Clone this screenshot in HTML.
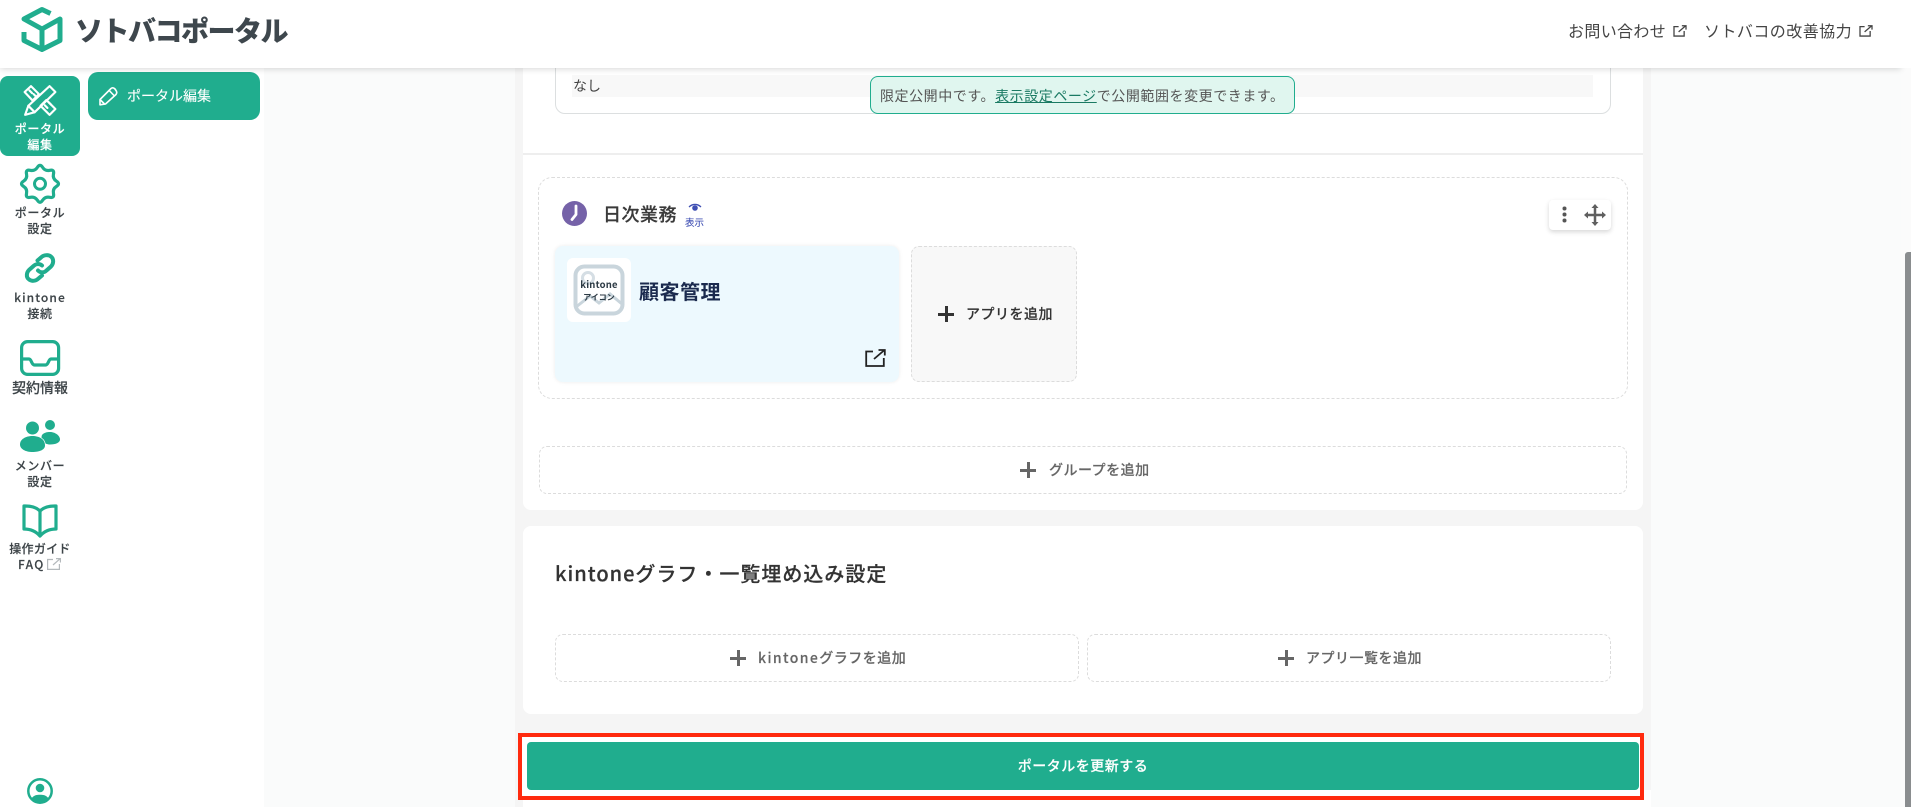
<!DOCTYPE html>
<html lang="ja">
<head>
<meta charset="utf-8">
<title>ソトバコポータル</title>
<style>
*{box-sizing:border-box;margin:0;padding:0}
html,body{width:1911px;height:807px;overflow:hidden;background:#fafbfb;font-family:"Noto Sans CJK JP","Liberation Sans",sans-serif;color:#333}
.abs,.t{position:absolute}
.t{white-space:nowrap;line-height:1}
svg{position:absolute;display:block;overflow:visible}
#col{position:absolute;left:515px;top:0;width:1136px;height:807px;background:#f5f5f5}
.card{position:absolute;left:523px;width:1120px;background:#fff}
.dash{position:absolute;border:1px dashed #dcdcdc;border-radius:8px;background:#fff}
.lbl{position:absolute;width:80px;text-align:center;font-size:12px;line-height:16px;font-weight:500;color:#3d4448;letter-spacing:.6px;left:0;-webkit-text-stroke:.15px currentColor}
.add{font-size:14px;font-weight:500;color:#666;letter-spacing:.5px;-webkit-text-stroke:.15px currentColor}
.plus{position:absolute;width:16px;height:16px;background:linear-gradient(#666,#666) center/16px 3px no-repeat,linear-gradient(#666,#666) center/3px 16px no-repeat}
</style>
</head>
<body>
<div id="col"></div>

<!-- top card -->
<div class="card" style="top:60px;height:450px;border-radius:0 0 8px 8px"></div>
<div class="abs" style="left:555px;top:50px;width:1056px;height:64px;border:1px solid #dcdfe0;border-radius:10px;background:#fff"></div>
<div class="abs" style="left:572px;top:75px;width:1021px;height:22px;background:#f8f8f8"></div>
<div class="t" style="left:573px;top:79px;font-size:14px;color:#444">なし</div>
<div class="abs" style="left:523px;top:153px;width:1120px;height:2px;background:#eeeeee"></div>

<!-- group -->
<div class="dash" style="left:538px;top:177px;width:1090px;height:222px;border-radius:14px"></div>
<svg style="left:562px;top:201px" width="25" height="25" viewBox="0 0 25 25"><circle cx="12.5" cy="12.5" r="12.5" fill="#7562a8"/><path d="M14 5V13.5L10 18.500" fill="none" stroke="#fff" stroke-width="2.800" stroke-linecap="round" stroke-linejoin="round"/></svg>
<div class="t" style="left:603px;top:205px;font-size:18px;font-weight:500;color:#3a3a3a;letter-spacing:.5px;-webkit-text-stroke:.2px currentColor">日次業務</div>
<svg style="left:688px;top:203px" width="14" height="9" viewBox="0 0 14 9"><path d="M1 4C4.5 .6 9.500 .6 13 4" fill="none" stroke="#3f4fb3" stroke-width="1.300"/><circle cx="7" cy="5" r="2.800" fill="#3f4fb3"/></svg>
<div class="t" style="left:685px;top:218px;font-size:9.500px;color:#3f4fb3;-webkit-text-stroke:.1px currentColor">表示</div>

<div class="abs" style="left:1549px;top:200px;width:62px;height:30px;background:#fff;border-radius:4px;box-shadow:0 2px 5px rgba(0,0,0,.16)"></div>
<svg style="left:1549px;top:200px" width="62" height="30" viewBox="0 0 62 30"><g fill="#555"><circle cx="15.500" cy="8.500" r="2"/><circle cx="15.500" cy="14.500" r="2"/><circle cx="15.500" cy="20.500" r="2"/></g><path d="M46 6V24M37 15H55" stroke="#5f5f5f" stroke-width="2.500" fill="none"/><path d="M46 4L49.500 8H42.500ZM46 26L49.500 22H42.500ZM35 15L39 11.500V18.500ZM57 15L53 11.500V18.500Z" fill="#5f5f5f"/></svg>

<!-- app card -->
<div class="abs" style="left:555px;top:246px;width:344px;height:136px;background:#edf9fe;border-radius:8px;box-shadow:0 0 4px rgba(0,0,0,.08)"></div>
<div class="abs" style="left:567px;top:258px;width:64px;height:64px;background:#fff;border-radius:6px"></div>
<svg style="left:567px;top:258px" width="64" height="64" viewBox="0 0 64 64"><rect x="8.500" y="8.500" width="47" height="47" rx="9" fill="none" stroke="#c9d5dc" stroke-width="4"/><circle cx="21" cy="20" r="5.500" fill="none" stroke="#d5dee4" stroke-width="3"/><path d="M9 49L23 38L32 45L43 36L55 46" fill="none" stroke="#c9d5dc" stroke-width="3"/></svg>
<div class="t" style="left:567px;top:280px;width:64px;text-align:center;font-size:9.500px;font-weight:700;color:#2c3a44;letter-spacing:.2px">kintone</div>
<div class="t" style="left:567px;top:294px;width:64px;text-align:center;font-size:8px;font-weight:700;color:#2c3a44">アイコン</div>
<div class="t" style="left:639px;top:281px;font-size:20px;font-weight:700;color:#1b2a4e;letter-spacing:.5px">顧客管理</div>
<svg style="left:865px;top:349px" width="21" height="18" viewBox="0 0 21 18"><path d="M8 2.500H1.200V17H18.800V9" fill="none" stroke="#222" stroke-width="1.800"/><path d="M9 10L19.500 1M13.500 1H19.800V6.500" fill="none" stroke="#222" stroke-width="1.800"/></svg>

<div class="dash" style="left:911px;top:246px;width:166px;height:136px;background:#f8f8f8"></div>
<div class="plus" style="left:938px;top:306px;background:linear-gradient(#333,#333) center/16px 3px no-repeat,linear-gradient(#333,#333) center/3px 16px no-repeat"></div>
<div class="t add" style="left:966px;top:307px;color:#333">アプリを追加</div>

<!-- add group -->
<div class="dash" style="left:539px;top:446px;width:1088px;height:48px"></div>
<div class="plus" style="left:1020px;top:462px"></div>
<div class="t add" style="left:1049px;top:463px">グループを追加</div>

<!-- card 2 -->
<div class="card" style="top:526px;height:188px;border-radius:8px"></div>
<div class="t" style="left:555px;top:563px;font-size:20px;font-weight:500;color:#333;letter-spacing:1px;-webkit-text-stroke:.2px currentColor">kintoneグラフ・一覧埋め込み設定</div>
<div class="dash" style="left:555px;top:634px;width:524px;height:48px"></div>
<div class="plus" style="left:730px;top:650px"></div>
<div class="t add" style="left:758px;top:651px"><span style="letter-spacing:1.400px">kintone</span>グラフを追加</div>
<div class="dash" style="left:1087px;top:634px;width:524px;height:48px"></div>
<div class="plus" style="left:1278px;top:650px"></div>
<div class="t add" style="left:1306px;top:651px">アプリ一覧を追加</div>

<!-- update bar -->
<div class="abs" style="left:523px;top:790px;width:1128px;height:17px;background:#fff"></div>
<div class="abs" style="left:518px;top:733px;width:1126px;height:67px;background:#fff;border:4px solid #ff2a0e"></div>
<div class="abs" style="left:527px;top:742px;width:1112px;height:48px;background:#20ad8e;border-radius:4px"></div>
<div class="t" style="left:527px;top:759px;width:1112px;text-align:center;font-size:14px;font-weight:500;color:#fff;letter-spacing:.5px;-webkit-text-stroke:.15px currentColor">ポータルを更新する</div>

<!-- toast -->
<div class="abs" style="left:870px;top:76px;width:425px;height:38px;background:#e0f6ef;border:1.500px solid #20ad8e;border-radius:8px"></div>
<div class="t" style="left:880px;top:89px;font-size:14px;color:#555;letter-spacing:.56px">限定公開中です。<span style="color:#1a7a63;text-decoration:underline">表示設定ページ</span>で公開範囲を変更できます。</div>

<!-- scrollbar -->
<div class="abs" style="left:1901px;top:0;width:10px;height:807px;background:#fbfbfb"></div>
<div class="abs" style="left:1905px;top:252px;width:6px;height:555px;background:#8a8d8f;border-radius:3px 0 0 0"></div>

<!-- sidebar -->
<div class="abs" style="left:0;top:0;width:264px;height:807px;background:#fff"></div>
<div class="abs" style="left:0;top:76px;width:80px;height:80px;background:#20ad8e;border-radius:8px"></div>
<div class="abs" style="left:88px;top:72px;width:172px;height:48px;background:#20ad8e;border-radius:10px"></div>

<svg style="left:23px;top:84px" width="34" height="33" viewBox="0 0 32 30" fill="none" stroke="#fff" stroke-width="2" stroke-linejoin="round" stroke-linecap="round"><path d="M25 1.500L30.500 7L11 26L2 28.500L5 20Z"/><path d="M5 20L11 26"/><path d="M1.500 7L7.500 1.500L15 9L9 15Z"/><path d="M6 5.500L8.500 8M10 9L12 11"/><path d="M16.500 20L22 14.500L30.500 23L25 28.500Z"/><path d="M20.500 19.500L23 22M24 16.500L26.500 19"/></svg>
<div class="lbl" style="top:121px;color:#fff">ポータル<br>編集</div>
<svg style="left:98px;top:86px" width="20" height="20" viewBox="0 0 20 20" fill="none" stroke="#fff" stroke-width="1.600" stroke-linejoin="round" stroke-linecap="round"><path d="M13 2.500Q15 1 17 3L18 4.500Q19.500 6.500 18 8.500L7.500 18L2 18.800L2 13.500Z"/><path d="M11.200 4.500L16 9.500"/><path d="M2.500 14L6.500 18"/></svg>
<div class="t" style="left:127px;top:89px;font-size:14px;color:#fff;-webkit-text-stroke:.1px #fff">ポータル編集</div>

<svg style="left:20px;top:164px" width="40" height="40" viewBox="0 0 40 40" fill="none" stroke="#20ad8e"><path transform="translate(20 19.800)" d="M-2.585 -16.485Q0 -20.500 2.585 -16.485Q5.170 -12.470 9.835 -13.485Q14.500 -14.500 13.485 -9.835Q12.470 -5.170 16.485 -2.585Q20.500 0 16.485 2.585Q12.470 5.170 13.485 9.835Q14.500 14.500 9.835 13.485Q5.170 12.470 2.585 16.485Q0 20.500 -2.585 16.485Q-5.170 12.470 -9.835 13.485Q-14.500 14.500 -13.485 9.835Q-12.470 5.170 -16.485 2.585Q-20.500 0 -16.485 -2.585Q-12.470 -5.170 -13.485 -9.835Q-14.500 -14.500 -9.835 -13.485Q-5.170 -12.470 -2.585 -16.485Z" stroke-width="3.200"/><circle cx="20" cy="19.800" r="5.500" stroke-width="3"/></svg>
<div class="lbl" style="top:205px">ポータル<br>設定</div>

<svg style="left:25px;top:253px" width="30" height="30" viewBox="0 0 30 30" fill="none" stroke="#20ad8e" stroke-width="4" stroke-linecap="round"><path d="M12.500 7.500L16 4.500C19 1.500 24 1.500 26.500 4C29 6.500 28.500 11 26 13.500L21.500 17.500C19 20 15.500 20 13 17.500"/><path d="M17 12.500C14.500 10.500 11 10.500 8.500 13L4 17C1.500 19.500 1 24 3.500 26C6 28.500 10.500 28.500 13.500 25.500L17 22.500"/></svg>
<div class="lbl" style="top:290px"><span style="letter-spacing:1.100px">kintone</span><br>接続</div>

<svg style="left:20px;top:340px" width="40" height="36" viewBox="0 0 40 36" fill="none" stroke="#20ad8e" stroke-width="3.200" stroke-linejoin="round"><rect x="1.600" y="1.600" width="37" height="32.800" rx="6"/><path d="M2 19H9C11.500 19 11.500 25 14.500 25H25.500C28.500 25 28.500 19 31 19H38"/></svg>
<div class="t" style="left:12px;top:381px;font-size:14px;font-weight:500;color:#3d4448;-webkit-text-stroke:.15px currentColor">契約情報</div>

<svg style="left:20px;top:420px" width="40" height="32" viewBox="0 0 40 32" fill="#20ad8e"><circle cx="12.500" cy="8" r="6.500"/><circle cx="30" cy="5" r="5"/><path d="M22 15C24 12.500 27 12 30 12C35 12 40 15.500 40 19.500C40 22.500 36 24.500 30 24.500C24 24.500 20 20 22 15Z"/><path d="M0 24.500C0 19 6 16 12.500 16C19 16 25 19 25 25.500C25 30 19 32 12.500 32C5.500 32 0 29 0 24.500Z" stroke="#fff" stroke-width="1.500" paint-order="stroke"/></svg>
<div class="lbl" style="top:458px">メンバー<br>設定</div>

<svg style="left:22px;top:504px" width="36" height="34" viewBox="0 0 36 34" fill="none" stroke="#20ad8e" stroke-width="3.200" stroke-linejoin="round"><path d="M18 7C14 3 8 1.800 2 2V25C8 25 14 27.500 18 32C22 27.500 28 25 34 25V2C28 1.800 22 3 18 7Z"/><path d="M18 7V32"/></svg>
<div class="lbl" style="top:541px;letter-spacing:.3px">操作ガイド</div>
<div class="t" style="left:18px;top:559px;font-size:12px;font-weight:500;color:#3d4448;letter-spacing:1.300px;-webkit-text-stroke:.15px currentColor">FAQ</div>
<svg style="left:47px;top:558px" width="14" height="12" viewBox="0 0 14 12" fill="none" stroke="#b4b9bc" stroke-width="1.200"><path d="M6 1.500H.6V11.400H12.400V6"/><path d="M6 7L13 .8M9 .6H13.400V4.500"/></svg>

<svg style="left:27px;top:778px" width="26" height="26" viewBox="0 0 26 26"><circle cx="13" cy="13" r="11.700" fill="#fff" stroke="#20ad8e" stroke-width="2.500"/><circle cx="13" cy="10" r="4.300" fill="#20ad8e"/><path d="M4.500 20.500C7 17 10 16.800 13 16.800C16 16.800 19 17 21.500 20.500C19 24 16 25 13 25C10 25 7 24 4.500 20.500Z" fill="#20ad8e"/></svg>

<!-- header -->
<div class="abs" style="left:0;top:0;width:1901px;height:68px;background:#fff;box-shadow:0 1px 6px rgba(0,0,0,.16)"></div>
<div class="abs" style="left:1901px;top:0;width:10px;height:68px;background:#fff"></div>
<svg style="left:20px;top:5px" width="44" height="49" viewBox="0 0 44 49" fill="none" stroke="#20ad8e" stroke-width="5" stroke-linejoin="round"><path d="M30.500 8.500L22 4.500L4 14L22 24L40 14V35.500L22 44.500L4 35.500V27"/><path d="M22 24V44.500"/></svg>
<div class="t" style="left:75px;top:16px;font-size:28px;font-weight:900;color:#3e474d;letter-spacing:-1.500px">ソトバコポータル</div>
<div class="t" style="left:1568px;top:22px;font-size:16px;color:#444;letter-spacing:.35px">お問い合わせ</div>
<svg style="left:1673px;top:25px" width="14" height="12" viewBox="0 0 15 13" fill="none" stroke="#444" stroke-width="1.400"><path d="M6 1.800H1V12H12V6.500"/><path d="M6 7.500L13.500 1M9.500 .8H14V5"/></svg>
<div class="t" style="left:1704px;top:22px;font-size:16px;color:#444;letter-spacing:.45px">ソトバコの改善協力</div>
<svg style="left:1859px;top:25px" width="14" height="12" viewBox="0 0 15 13" fill="none" stroke="#444" stroke-width="1.400"><path d="M6 1.800H1V12H12V6.500"/><path d="M6 7.500L13.500 1M9.500 .8H14V5"/></svg>
</body>
</html>
